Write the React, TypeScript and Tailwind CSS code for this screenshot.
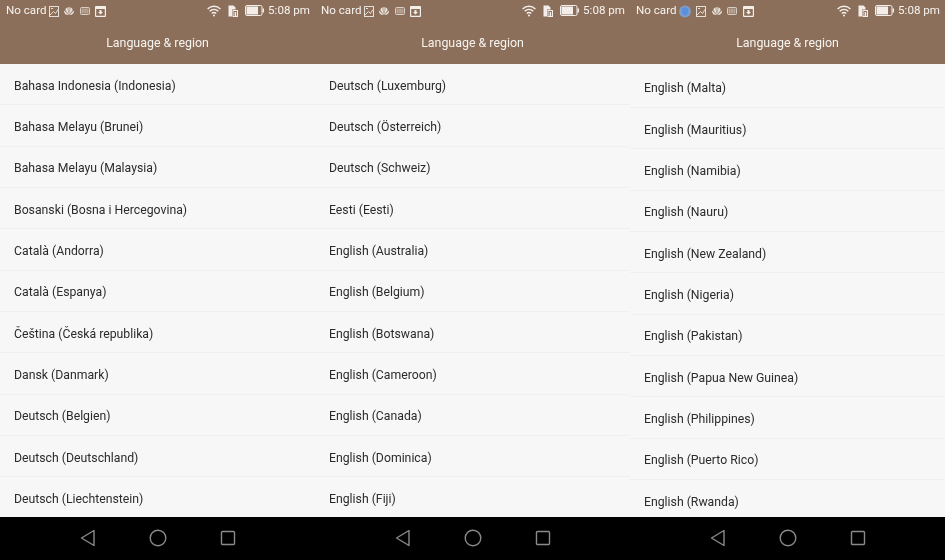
const leftItems = [
  "Bahasa Indonesia (Indonesia)",
  "Bahasa Melayu (Brunei)",
  "Bahasa Melayu (Malaysia)",
  "Bosanski (Bosna i Hercegovina)",
  "Català (Andorra)",
  "Català (Espanya)",
  "Čeština (Česká republika)",
  "Dansk (Danmark)",
  "Deutsch (Belgien)",
  "Deutsch (Deutschland)",
  "Deutsch (Liechtenstein)",
];

const middleItems = [
  "Deutsch (Luxemburg)",
  "Deutsch (Österreich)",
  "Deutsch (Schweiz)",
  "Eesti (Eesti)",
  "English (Australia)",
  "English (Belgium)",
  "English (Botswana)",
  "English (Cameroon)",
  "English (Canada)",
  "English (Dominica)",
  "English (Fiji)",
];

const rightItems = [
  "English (Malta)",
  "English (Mauritius)",
  "English (Namibia)",
  "English (Nauru)",
  "English (New Zealand)",
  "English (Nigeria)",
  "English (Pakistan)",
  "English (Papua New Guinea)",
  "English (Philippines)",
  "English (Puerto Rico)",
  "English (Rwanda)",
];

function ImageIcon() {
  return (
    <svg width="10" height="11" viewBox="0 0 10 11" fill="none" stroke="#e6dfd8" strokeWidth="1">
      <rect x="0.5" y="0.5" width="9" height="10" />
      <path d="M1 9 L4.5 5.5 L6.5 7.5 L9 3.5 M2 2.5 H4" />
    </svg>
  );
}

function HuaweiIcon() {
  return (
    <svg width="10" height="8" viewBox="0 0 10 8" fill="#e6dfd8">
      <path d="M5 7.8 L3.4 0.6 C2 0.8 1.2 2 1.6 3.4 Z" />
      <path d="M5 7.8 L6.6 0.6 C8 0.8 8.8 2 8.4 3.4 Z" />
      <path d="M5 7.8 L4.1 0.2 H5.9 Z" />
      <path d="M4.8 7.8 L0 3.6 C-0.2 5.4 1 7.2 2.4 7.8 Z" />
      <path d="M5.2 7.8 L10 3.6 C10.2 5.4 9 7.2 7.6 7.8 Z" />
    </svg>
  );
}

function KeyboardIcon() {
  return (
    <svg width="10" height="8" viewBox="0 0 10 8" fill="none" stroke="#d8cec5" strokeWidth="1">
      <rect x="0.5" y="0.5" width="9" height="7" rx="1" fill="#a08875" />
      <path d="M2 3 H8 M2 5 H8" strokeDasharray="1 0.6" />
    </svg>
  );
}

function InboxIcon() {
  return (
    <svg width="11" height="11" viewBox="0 0 11 11" fill="#f3eee9">
      <path d="M1 0 H10 Q11 0 11 1 V10 Q11 11 10 11 H1 Q0 11 0 10 V1 Q0 0 1 0 Z M1.2 3 V9.8 H9.8 V3 Z" fillRule="evenodd" />
      <path d="M4.5 4 H6.5 V6 H8 L5.5 8.5 L3 6 H4.5 Z" />
    </svg>
  );
}

function ShieldDot() {
  return (
    <svg width="12" height="13" viewBox="0 0 12 13">
      <circle cx="6" cy="6.5" r="6" fill="#7f9cc6" />
      <path d="M6 2.2 L9.2 3.6 V7 C9.2 8.9 7.5 10.2 6 10.8 C4.5 10.2 2.8 8.9 2.8 7 V3.6 Z" fill="#5b8fe0" />
    </svg>
  );
}

function WifiIcon() {
  return (
    <svg width="14" height="12" viewBox="0 0 14 12" fill="none" stroke="#f3eee9" strokeWidth="1.4">
      <path d="M0.6 4 C4.2 0.4 9.8 0.4 13.4 4" />
      <path d="M2.7 6.3 C5.2 3.9 8.8 3.9 11.3 6.3" />
      <path d="M4.8 8.5 C6 7.4 8 7.4 9.2 8.5" />
      <circle cx="7" cy="10.6" r="1" fill="#f3eee9" stroke="none" />
    </svg>
  );
}

function SimIcon() {
  return (
    <svg width="10" height="12" viewBox="0 0 10 12">
      <path d="M0.5 0.5 H5.5 L7.5 2.5 V4.5 H4 V11.5 H0.5 Z" fill="#f3eee9" />
      <rect x="5" y="5.5" width="4.5" height="6" fill="none" stroke="#f3eee9" strokeWidth="1" />
      <rect x="6.6" y="7" width="1.6" height="4" fill="#f3eee9" />
    </svg>
  );
}

function BatteryIcon() {
  return (
    <svg width="19" height="11" viewBox="0 0 19 11">
      <rect x="0.5" y="0.5" width="16.5" height="10" rx="1.5" fill="none" stroke="#f3eee9" strokeWidth="1" />
      <rect x="1.5" y="1.5" width="11.5" height="8" fill="#f3eee9" />
      <rect x="17.5" y="3.5" width="1.5" height="4" fill="#f3eee9" />
    </svg>
  );
}

function StatusBar({ withShield }: { withShield?: boolean }) {
  return (
    <div className="flex h-[22px] items-center pl-[6px] pr-[5px] text-[11.6px] text-[#f7f3ef] blur-[0.3px]">
      <span>No card</span>
      <div className="ml-[2px] flex items-center gap-[5.5px]">
        {withShield && <ShieldDot />}
        <ImageIcon />
        <HuaweiIcon />
        <KeyboardIcon />
        <InboxIcon />
      </div>
      <div className="ml-auto flex items-center">
        <WifiIcon />
        <div className="ml-[7px]">
          <SimIcon />
        </div>
        <div className="ml-[7px]">
          <BatteryIcon />
        </div>
        <span className="ml-[4px]">5:08 pm</span>
      </div>
    </div>
  );
}

function NavBar() {
  return (
    <div className="flex h-[43px] items-center justify-center gap-[50px] bg-black">
      <svg className="mb-[1px]" width="20" height="20" viewBox="0 0 20 20" fill="none" stroke="#8a8a8a" strokeWidth="1.4">
        <path d="M16 2.5 V17.5 L3.5 10 Z" strokeLinejoin="round" />
      </svg>
      <svg className="mb-[1px]" width="20" height="20" viewBox="0 0 20 20" fill="none" stroke="#8a8a8a" strokeWidth="1.4">
        <circle cx="10" cy="10" r="7.8" />
      </svg>
      <svg className="mb-[1px]" width="20" height="20" viewBox="0 0 20 20" fill="none" stroke="#8a8a8a" strokeWidth="1.4">
        <rect x="3.5" y="3.5" width="13" height="13" rx="1" />
      </svg>
    </div>
  );
}

function Panel({ items, shifted, withShield }: { items: string[]; shifted?: boolean; withShield?: boolean }) {
  return (
    <div className="flex h-[560px] w-[315px] flex-col">
      <div className="h-[64px] bg-[#8b6f5b]">
        <StatusBar withShield={withShield} />
        <div className="pt-[1px] text-center text-[12.4px] leading-[40px] text-[#f7f3ef] blur-[0.25px]">Language &amp; region</div>
      </div>
      <div className={shifted ? "h-[453px] overflow-hidden bg-[#f7f7f7] pt-[2.5px]" : "h-[453px] overflow-hidden bg-[#f7f7f7]"}>
        {items.map((item) => (
          <div key={item} className="flex h-[41.35px] items-center border-b border-[#f0f0f0] pl-[14px] pt-[3.5px]">
            <span className="text-[12.25px] text-[#2b2b2b] blur-[0.25px]">{item}</span>
          </div>
        ))}
      </div>
      <NavBar />
    </div>
  );
}

export default function App() {
  return (
    <div className="flex h-[560px] w-[945px] overflow-hidden font-['Roboto',sans-serif]">
      <Panel items={leftItems} />
      <Panel items={middleItems} />
      <Panel items={rightItems} shifted withShield />
    </div>
  );
}
